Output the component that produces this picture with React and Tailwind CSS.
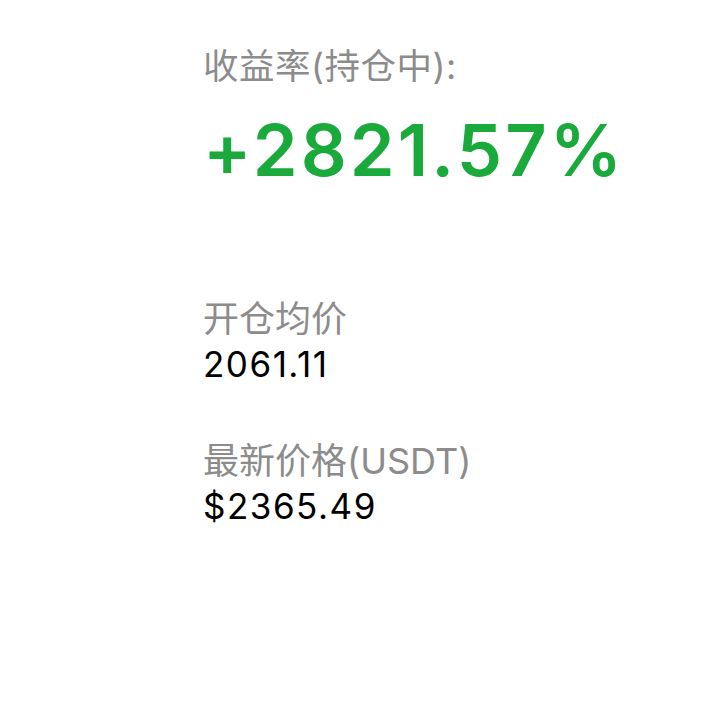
export default function App() {
  const cjk = { fontFamily: 'Inter, "Noto Sans CJK SC", sans-serif' }
  return (
    <div className="w-[710px] h-[705px] bg-white" style={cjk}>
      <div className="pl-[203px] pt-[44px] flex flex-col">
        <div className="text-[35.5px] leading-[46px] text-[#8c8c8c] tracking-[0.5px]">收益率(持仓中):</div>
        <div className="mt-[20px] text-[72px] leading-[80px] font-semibold text-[#1aaa3b] tracking-[3.1px]">+2821.57%</div>

        <div className="mt-[106px] text-[36px] leading-[46px] text-[#8c8c8c]">开仓均价</div>
        <div className="text-[35px] leading-[44px] text-black tracking-[1.5px]">2061.11</div>

        <div className="mt-[52px] text-[36px] leading-[46px] text-[#8c8c8c]">最新价格(USDT)</div>
        <div className="text-[35px] leading-[44px] text-black tracking-[1.5px]">$2365.49</div>
      </div>
    </div>
  )
}
